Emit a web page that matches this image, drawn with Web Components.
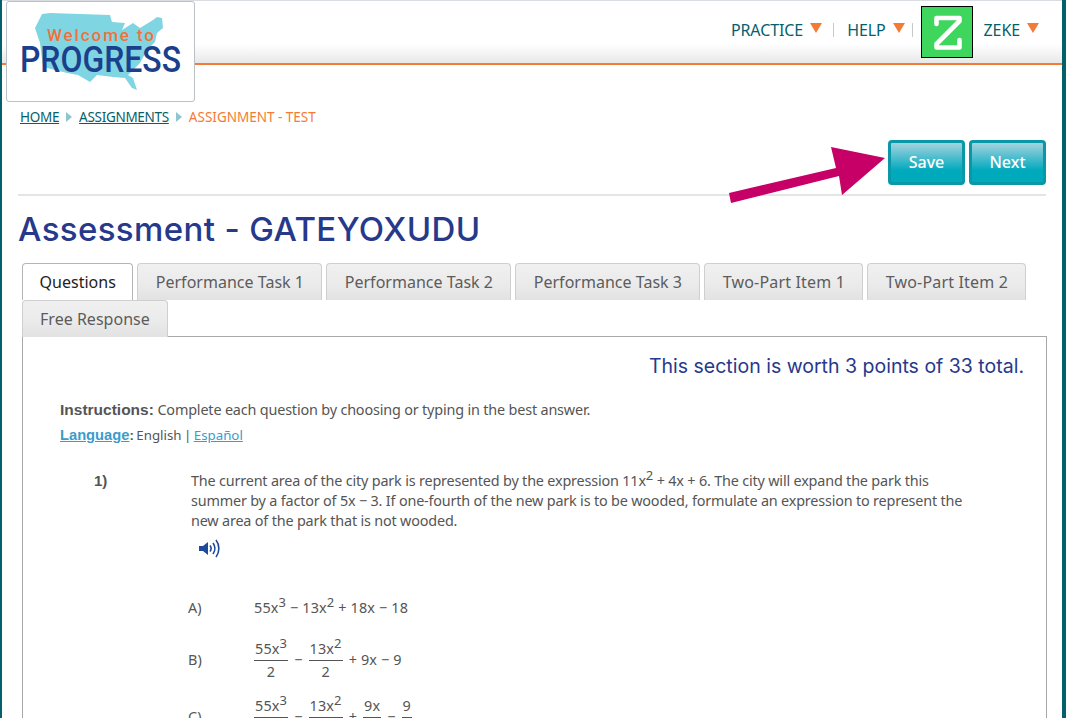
<!DOCTYPE html>
<html lang="en">
<head>
<meta charset="utf-8">
<title>Assessment - GATEYOXUDU</title>
<style>
  html, body { margin: 0; height: 718px; overflow: hidden; background: #fff; }
  body { font-family: "Noto Sans", sans-serif; color: #555; }
</style>
</head>
<body>
<app-page>
  <app-header></app-header>
  <app-main></app-main>
</app-page>
<script>
const BODY_FONT = '"Noto Sans", sans-serif';

class BaseEl extends HTMLElement {
  constructor() {
    super();
    this.attachShadow({ mode: 'open' });
    this.shadowRoot.innerHTML = this.render();
  }
  render() { return '<slot></slot>'; }
}

class AppPage extends BaseEl {
  render() {
    return `
      <style>
        :host {
          display: block; position: relative; box-sizing: border-box;
          height: 718px; overflow: hidden;
          border-left: 2px solid #04616b; border-right: 4px solid #04616b;
        }
        .top { position: absolute; left: -2px; right: -4px; top: 0; height: 1px; background: #d9dce0; z-index: 3; }
      </style>
      <div class="top"></div>
      <slot></slot>
      <app-logo></app-logo>
      <pink-arrow></pink-arrow>`;
  }
}

class AppHeader extends BaseEl {
  render() {
    return `
      <style>
        :host {
          display: flex; justify-content: flex-end; align-items: flex-start;
          box-sizing: border-box; height: 65px; padding: 6px 23px 0 0;
          border-bottom: 2px solid #f47b36;
          background: linear-gradient(#fff 0, #fff 44px, #e8e8e8 63px);
        }
        .sep { width: 1px; height: 14px; background: #c9c9c9; }
        .sep.a { margin: 17px 13px 0 11px; }
        .sep.b { margin: 17px 8px 0 7px; }
        .z { box-sizing: border-box; width: 52px; height: 52px; background: #3fd65e; border: 1px solid #000; margin-right: 11px; }
        svg { display: block; }
      </style>
      <nav-item>PRACTICE</nav-item>
      <i class="sep a"></i>
      <nav-item>HELP</nav-item>
      <i class="sep b"></i>
      <div class="z">
        <svg width="50" height="50" viewBox="0 0 50 50">
          <path d="M14.5 17V11H37.5V14L14.5 37V40.5H37.5V33" fill="none" stroke="#fff" stroke-width="4.6" stroke-linejoin="round" stroke-linecap="round"/>
        </svg>
      </div>
      <nav-item>ZEKE</nav-item>`;
  }
}

class NavItem extends BaseEl {
  render() {
    return `
      <style>
        :host {
          display: inline-flex; align-items: flex-start; gap: 7px; height: 40px; padding-top: 14px; box-sizing: border-box;
          font: 16px/20px ${BODY_FONT}; letter-spacing: -0.1px; color: #04616b;
        }
        i { width: 0; height: 0; margin-top: 3px; border-left: 6px solid transparent; border-right: 6px solid transparent; border-top: 10px solid #f47b36; }
      </style>
      <slot></slot><i></i>`;
  }
}

class AppLogo extends BaseEl {
  render() {
    return `
      <style>
        :host {
          position: absolute; left: 4px; top: 1px; z-index: 2; box-sizing: border-box;
          width: 189px; height: 101px; background: #fff;
          border: 1px solid #b9c2c4; border-radius: 3px;
        }
        svg { display: block; }
      </style>
      <svg width="187" height="99" viewBox="7 2 187 99">
        <path fill="#7fd6e2" d="M42 14L50 13L80 14L110 15L112 22L125 23L122 30L133 23L140 28L153 20L157 17L162 18L163 28L157 33L155 42L147 50L140 63L128 75L133 78L137 90L132 88L125 78L113 77L97 75L90 82L78 75L67 73L43 67L40 43L35 28Z"/>
        <text x="47" y="41" font-family="'Roboto',sans-serif" font-size="17" font-weight="500" fill="#f4703a" textLength="107" lengthAdjust="spacing">Welcome to</text>
        <text x="20" y="72" font-family="'Roboto',sans-serif" font-size="36" font-weight="500" fill="#1c3f8c" textLength="161" lengthAdjust="spacingAndGlyphs">PROGRESS</text>
      </svg>`;
  }
}

class PinkArrow extends BaseEl {
  render() {
    return `
      <style>
        :host { position: absolute; left: 718px; top: 140px; z-index: 2; width: 170px; height: 70px; pointer-events: none; }
        svg { display: block; }
      </style>
      <svg width="170" height="70" viewBox="718 140 170 70">
        <path fill="#c60067" d="M883 158L829 147L834 168L727 193L729 203L837 176L840 195Z"/>
      </svg>`;
  }
}

class BreadCrumb extends BaseEl {
  render() {
    return `
      <style>
        :host {
          display: flex; align-items: center; gap: 7px; height: 20px;
          margin-left: 18px; font: 13.5px/20px ${BODY_FONT}; letter-spacing: -0.3px; color: #04616b;
        }
        a { color: #04616b; text-decoration: underline; }
        b { font-weight: 400; color: #f47b36; letter-spacing: 0; }
        i { width: 0; height: 0; border-top: 5px solid transparent; border-bottom: 5px solid transparent; border-left: 6px solid #8fc6ce; }
      </style>
      <a>HOME</a><i></i><a>ASSIGNMENTS</a><i></i><b>ASSIGNMENT - TEST</b>`;
  }
}

class ActionBtn extends BaseEl {
  render() {
    return `
      <style>
        :host {
          display: flex; align-items: center; justify-content: center; box-sizing: border-box;
          width: 77px; height: 45px; padding-bottom: 2px; border: 3px solid #0a97a8; border-radius: 4px;
          background: linear-gradient(#a5d3df, #00aabd 70%);
          color: #fff; font: 500 16px/20px ${BODY_FONT};
        }
      </style>
      <slot></slot>`;
  }
}

class TabBar extends BaseEl {
  render() {
    return `
      <style>
        :host { display: flex; flex-wrap: wrap; gap: 0 4px; margin: 0 0 -1px 20px; width: 1010px; position: relative; z-index: 1; }
      </style>
      <slot></slot>`;
  }
}

class TabItem extends BaseEl {
  render() {
    return `
      <style>
        :host {
          display: flex; align-items: center; justify-content: center; box-sizing: border-box; height: 37px; padding: 0 17px 1px;
          border: 1px solid #cfcfcf; border-bottom: 0; border-radius: 4px 4px 0 0;
          background: linear-gradient(#f0f0f0, #ebebeb 55%, #e2e2e2);
          font: 16px/20px ${BODY_FONT}; letter-spacing: 0.02px; color: #5c5c5c; white-space: nowrap;
        }
        :host([active]) { padding: 0 16.5px 1px; background: #fff; color: #222; border-color: #b5b5b5; }
        :host([task]) { min-width: 185px; }
        :host([wide]) { min-width: 159px; letter-spacing: 0.17px; }
      </style>
      <slot></slot>`;
  }
}

class MathFrac extends BaseEl {
  render() {
    return `
      <style>
        :host { display: inline-flex; flex-direction: column; align-items: stretch; text-align: center; vertical-align: middle; line-height: 21px; }
        .n { border-bottom: 1px solid #555; padding: 0 1px 1px; }
      </style>
      <div class="n"><slot name="n"></slot></div>
      <div><slot name="d"></slot></div>`;
  }
}

class AnswerRow extends BaseEl {
  render() {
    return `
      <style>
        :host { display: flex; align-items: center; font: 14.4px/20px ${BODY_FONT}; letter-spacing: 0.15px; color: #555; }
        .l { width: 66px; flex: none; }
      </style>
      <div class="l"><slot name="label"></slot></div>
      <div><slot></slot></div>`;
  }
}

class QuestionPanel extends BaseEl {
  render() {
    return `
      <style>
        :host { display: block; box-sizing: border-box; height: 400px; margin: 0 15px 0 20px; border: 1px solid #a8a8a8; font: 14.4px/20px ${BODY_FONT}; color: #555; }
        .worth { text-align: right; margin: 14px 22px 0 0; font: 19.5px/30px Inter, sans-serif; color: #26398a; }
        .ins { margin: 19px 0 0 37px; letter-spacing: -0.17px; }
        .ins b { font: bold 15.5px/20px "Liberation Sans", sans-serif; letter-spacing: 0; }
        .lang { margin: 5px 0 0 37px; font-size: 13.3px; word-spacing: -1px; }
        .lang a { color: #3a9ccb; text-decoration: underline; }
        .lang a.b { font: bold 14.7px/20px "Liberation Sans", sans-serif; }
        .lang b { font-family: "Liberation Sans", sans-serif; }
        .q { display: grid; grid-template-columns: 97px 782px; margin: 25px 0 0 71px; }
        .num { font: bold 15px/20px "Liberation Sans", sans-serif; color: #555; }
        .text { letter-spacing: -0.18px; }
        sup { font-size: 13px; line-height: 0; }
        .spk { display: block; margin: 8px 0 0 8px; }
        .answers { margin: 39px 0 0 165px; display: flex; flex-direction: column; gap: 20px; }
        .eq { display: inline-flex; align-items: center; gap: 6px; }
        .c { margin-top: -7px; }
      </style>
      <div class="worth">This section is worth 3 points of 33 total.</div>
      <div class="ins"><b>Instructions:</b> Complete each question by choosing or typing in the best answer.</div>
      <div class="lang"><a class="b">Language</a><b>:</b> English | <a>Español</a></div>
      <div class="q">
        <div class="num">1)</div>
        <div>
          <div class="text">The current area of the city park is represented by the expression 11x<sup>2</sup> + 4x + 6. The city will expand the park this summer by a factor of 5x − 3. If one-fourth of the new park is to be wooded, formulate an expression to represent the new area of the park that is not wooded.</div>
          <svg class="spk" width="22" height="20" viewBox="0 0 22 20">
            <path fill="#1f4a9c" d="M0 7H4L9 3V16L4 12H0Z"/>
            <g fill="none" stroke="#1f4a9c" stroke-width="1.6">
              <path d="M11 6.5C12.5 8.5 12.5 10.5 11 12.5"/>
              <path d="M14 4C16.5 7.5 16.5 11.5 14 15"/>
              <path d="M17 1C20.8 6 20.8 13 17 18"/>
            </g>
          </svg>
        </div>
      </div>
      <div class="answers">
        <answer-row><span slot="label">A)</span>55x<sup>3</sup> − 13x<sup>2</sup> + 18x − 18</answer-row>
        <answer-row><span slot="label">B)</span>
          <span class="eq">
            <math-frac><span slot="n">55x<sup>3</sup></span><span slot="d">2</span></math-frac> −
            <math-frac><span slot="n">13x<sup>2</sup></span><span slot="d">2</span></math-frac> + 9x − 9
          </span>
        </answer-row>
        <answer-row class="c"><span slot="label">C)</span>
          <span class="eq">
            <math-frac><span slot="n">55x<sup>3</sup></span><span slot="d">2</span></math-frac> −
            <math-frac><span slot="n">13x<sup>2</sup></span><span slot="d">2</span></math-frac> +
            <math-frac><span slot="n">9x</span><span slot="d">2</span></math-frac> −
            <math-frac><span slot="n">9</span><span slot="d">2</span></math-frac>
          </span>
        </answer-row>
      </div>`;
  }
}

class AppMain extends BaseEl {
  render() {
    return `
      <style>
        :host { display: block; padding-top: 42px; }
        .bar { display: flex; justify-content: flex-end; gap: 4px; margin: 13px 16px 0 0; padding-bottom: 9px; }
        hr { height: 2px; border: 0; margin: 0 16px 0 16px; background: #e4e6e6; }
        h1 { margin: 13px 0 14px 16px; font: 500 33px/40px Inter, sans-serif; letter-spacing: 0.38px; color: #26398a; }
      </style>
      <bread-crumb></bread-crumb>
      <div class="bar"><action-btn>Save</action-btn><action-btn>Next</action-btn></div>
      <hr>
      <h1>Assessment - GATEYOXUDU</h1>
      <tab-bar>
        <tab-item active>Questions</tab-item>
        <tab-item task>Performance Task 1</tab-item>
        <tab-item task>Performance Task 2</tab-item>
        <tab-item task>Performance Task 3</tab-item>
        <tab-item wide>Two-Part Item 1</tab-item>
        <tab-item wide>Two-Part Item 2</tab-item>
        <tab-item>Free Response</tab-item>
      </tab-bar>
      <question-panel></question-panel>`;
  }
}

customElements.define('nav-item', NavItem);
customElements.define('app-logo', AppLogo);
customElements.define('pink-arrow', PinkArrow);
customElements.define('bread-crumb', BreadCrumb);
customElements.define('action-btn', ActionBtn);
customElements.define('tab-bar', TabBar);
customElements.define('tab-item', TabItem);
customElements.define('math-frac', MathFrac);
customElements.define('answer-row', AnswerRow);
customElements.define('question-panel', QuestionPanel);
customElements.define('app-header', AppHeader);
customElements.define('app-main', AppMain);
customElements.define('app-page', AppPage);
</script>
</body>
</html>
